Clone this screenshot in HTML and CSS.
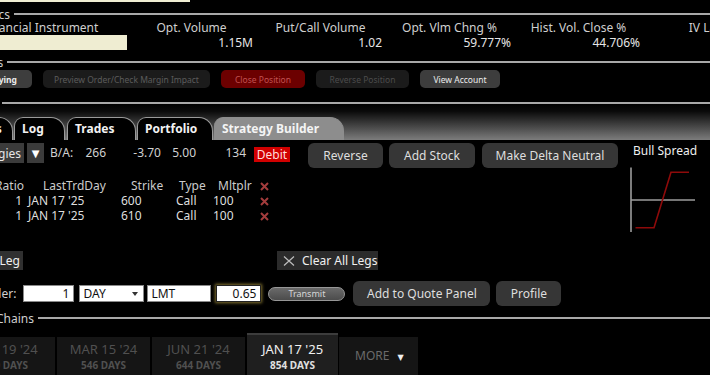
FILE: index.html
```html
<!DOCTYPE html>
<html lang="en">
<head>
  <meta charset="UTF-8" />
  <meta name="viewport" content="width=device-width, initial-scale=1.0"/>
  <title>Option Trader - Strategy Builder</title>
  <link rel="stylesheet" href="styles.css">
</head>
<body>
  <div class="screen">
    <div class="quote-strip"></div>

    <div class="section-head">
      <span class="section-title title-analytics">Analytics</span>
      <span class="rule"></span>
    </div>

    <div class="stats">
      <div class="stat stat-first">
        <div class="stat-label">Financial Instrument</div>
        <div class="stat-input"></div>
      </div>
      <div class="stat">
        <div class="stat-label">Opt. Volume</div>
        <div class="stat-value">1.15M</div>
      </div>
      <div class="stat">
        <div class="stat-label">Put/Call Volume</div>
        <div class="stat-value">1.02</div>
      </div>
      <div class="stat">
        <div class="stat-label">Opt. Vlm Chng %</div>
        <div class="stat-value">59.777%</div>
      </div>
      <div class="stat">
        <div class="stat-label">Hist. Vol. Close %</div>
        <div class="stat-value">44.706%</div>
      </div>
      <div class="stat">
        <div class="stat-label">IV Last</div>
        <div class="stat-value"></div>
      </div>
    </div>

    <div class="section-head section-actions">
      <span class="section-title title-actions">Actions</span>
      <span class="rule"></span>
    </div>

    <div class="action-bar">
      <button class="act act-on act-underlying">Underlying</button>
      <button class="act act-preview">Preview Order/Check Margin Impact</button>
      <button class="act act-close">Close Position</button>
      <button class="act act-reverse">Reverse Position</button>
      <button class="act act-on act-account">View Account</button>
    </div>

    <div class="divider"></div>

    <div class="tabstrip">
      <div class="tab tab-cut">Orders</div>
      <div class="tab tab-log">Log</div>
      <div class="tab tab-trades">Trades</div>
      <div class="tab tab-portfolio">Portfolio</div>
      <div class="tab tab-active">Strategy Builder</div>
    </div>

    <div class="builder">
      <div class="builder-main">
        <div class="strategy-row">
          <button class="dark-btn strat-btn">Strategies</button>
          <button class="dark-btn drop-btn">&#9660;</button>
          <span class="ba-label">B/A:</span>
          <span class="q q-bid">266</span>
          <span class="q q-ask">-3.70</span>
          <span class="q q-mid">5.00</span>
          <span class="q q-size">134</span>
          <span class="debit">Debit</span>
          <button class="grey-btn btn-reverse">Reverse</button>
          <button class="grey-btn btn-stock">Add Stock</button>
          <button class="grey-btn btn-delta">Make Delta Neutral</button>
        </div>

        <div class="legs">
          <div class="legs-head">Ratio</div>
          <div class="legs-head">LastTrdDay</div>
          <div class="legs-head">Strike</div>
          <div class="legs-head">Type</div>
          <div class="legs-head">Mltplr</div>
          <div class="legs-head"><svg class="x-icon" viewBox="0 0 9 9"><path d="M1 1L8 8M8 1L1 8"/></svg></div>

          <div class="leg-cell">1</div>
          <div class="leg-cell">JAN 17 '25</div>
          <div class="leg-cell">600</div>
          <div class="leg-cell">Call</div>
          <div class="leg-cell">100</div>
          <div class="leg-cell"><svg class="x-icon" viewBox="0 0 9 9"><path d="M1 1L8 8M8 1L1 8"/></svg></div>

          <div class="leg-cell">1</div>
          <div class="leg-cell">JAN 17 '25</div>
          <div class="leg-cell">610</div>
          <div class="leg-cell">Call</div>
          <div class="leg-cell">100</div>
          <div class="leg-cell"><svg class="x-icon" viewBox="0 0 9 9"><path d="M1 1L8 8M8 1L1 8"/></svg></div>
        </div>

        <div class="leg-actions">
          <button class="flat-btn add-leg">Add Leg</button>
          <button class="flat-btn clear-legs">
            <svg class="clear-icon" viewBox="0 0 12 10"><path d="M1 0.5L11 9.5M11 0.5L1 9.5"/></svg>
            Clear All Legs
          </button>
        </div>

        <div class="order-row">
          <span class="order-label">Order:</span>
          <div class="field field-qty">1</div>
          <div class="field field-tif">DAY <svg class="caret" viewBox="0 0 6 4"><path d="M0 0H6L3 4Z"/></svg></div>
          <div class="field field-type">LMT</div>
          <div class="field field-price">0.65</div>
          <button class="transmit">Transmit</button>
          <button class="grey-btn btn-quote">Add to Quote Panel</button>
          <button class="grey-btn btn-profile">Profile</button>
        </div>
      </div>

      <div class="builder-side">
        <div class="side-title">Bull Spread</div>
        <svg class="payoff" viewBox="0 0 70 70" width="70" height="70">
          <path class="axis" d="M3 2.5V67M3 35H67"/>
          <path class="pnl" d="M7.5 62.7H26L43 7.3H61"/>
        </svg>
      </div>
    </div>

    <div class="section-head section-chains">
      <span class="section-title title-chains">Option Chains</span>
      <span class="rule"></span>
    </div>

    <div class="expiries">
      <div class="expiry expiry-cut">
        <div class="exp-date">DEC 19 '24</div>
        <div class="exp-days">490 DAYS</div>
      </div>
      <div class="expiry">
        <div class="exp-date">MAR 15 '24</div>
        <div class="exp-days">546 DAYS</div>
      </div>
      <div class="expiry">
        <div class="exp-date">JUN 21 '24</div>
        <div class="exp-days">644 DAYS</div>
      </div>
      <div class="expiry expiry-active">
        <div class="exp-date">JAN 17 '25</div>
        <div class="exp-days">854 DAYS</div>
      </div>
      <div class="expiry expiry-more">MORE <span class="more-caret">&#9660;</span></div>
    </div>
  </div>
</body>
</html>
```

FILE: styles.css
```css
* {
  box-sizing: border-box;
}

body {
  margin: 0;
  background-color: #000;
  font-family: "Noto Sans", "DejaVu Sans", sans-serif;
  color: #d4d4d4;
}

button {
  font-family: inherit;
  border: none;
  padding: 0;
  cursor: pointer;
}

.screen {
  width: 710px;
  height: 375px;
  overflow: hidden;
}

.quote-strip {
  width: 190px;
  height: 2px;
  background-color: #efedd2;
}

/* section headers with a rule */
.section-head {
  display: flex;
  align-items: center;
  height: 14px;
  margin-top: 5px;
}

.section-title {
  font-size: 12px;
  color: #cfcfcf;
  white-space: nowrap;
  padding-right: 4px;
}

.title-analytics {
  margin-left: -40px;
}

.title-actions {
  margin-left: -38px;
}

.title-chains {
  margin-left: -46px;
}

.rule {
  flex: 1;
  height: 2px;
  background-color: #a8a8a8;
}

/* analytics stats */
.stats {
  display: grid;
  grid-template-columns: 127px repeat(5, 129px);
}

.stat-label {
  font-size: 12px;
  line-height: 14px;
  height: 14px;
  text-align: center;
  white-space: nowrap;
  color: #cfcfcf;
}

.stat-first .stat-label {
  text-align: left;
  text-indent: -18px;
}

.stat-value {
  font-size: 12px;
  line-height: 15px;
  height: 15px;
  text-align: right;
  padding-right: 3px;
  color: #e6e6e6;
}

.stat-input {
  height: 15px;
  background-color: #efedd2;
}

/* action buttons */
.action-bar {
  display: flex;
  gap: 11px;
  margin-top: 1px;
}

.act {
  height: 18px;
  border-radius: 5px;
  font-size: 8.5px;
  background-color: #1b1b1b;
  color: #5c5c5c;
  flex-shrink: 0;
}

.act-on {
  background-color: #3d3d3d;
  color: #ececec;
}

.act-underlying {
  width: 76px;
  margin-left: -44px;
  text-align: right;
  padding-right: 15px;
  font-weight: bold;
}

.act-preview {
  width: 167px;
}

.act-close {
  width: 84px;
  background-color: #6c0000;
  color: #c25252;
}

.act-reverse {
  width: 93px;
  color: #4c4c4c;
}

.act-account {
  width: 80px;
}

.divider {
  height: 2px;
  margin: 14px 0 0 2px;
  background-color: #a8a8a8;
}

/* tabs */
.tabstrip {
  display: flex;
  align-items: flex-end;
  gap: 1px;
  height: 36px;
  background: linear-gradient(#000 0%, #0a0a0a 20%, #7c7c7c 100%);
}

.tab {
  height: 23px;
  padding: 2px 0 0 7px;
  font-size: 12px;
  font-weight: bold;
  line-height: 18px;
  color: #f2f2f2;
  background-color: #000;
  border: 1px solid #9a9a9a;
  border-bottom: none;
  border-radius: 9px 14px 0 0;
  white-space: nowrap;
  flex-shrink: 0;
}

.tab-cut {
  width: 60px;
  margin-left: -47px;
}

.tab-log {
  width: 51px;
}

.tab-trades {
  width: 69px;
  margin-left: 1px;
}

.tab-portfolio {
  width: 76px;
}

.tab-active {
  width: 130px;
  background-color: #8d8d8d;
  border-color: #8d8d8d;
  color: #f4f4f4;
}

/* strategy builder */
.builder {
  display: flex;
  margin-top: 3px;
}

.builder-main {
  width: 626px;
  flex-shrink: 0;
}

.builder-side {
  flex: 1;
  padding-left: 7px;
}

.strategy-row {
  display: flex;
  align-items: flex-start;
  height: 25px;
  font-size: 12px;
}

.dark-btn {
  height: 20px;
  background-color: #3b3b3b;
  color: #e6e6e6;
  font-size: 12px;
  flex-shrink: 0;
}

.strat-btn {
  width: 64px;
  margin-left: -40px;
  text-align: right;
  padding-right: 3px;
}

.drop-btn {
  width: 17px;
  margin-left: 3px;
  font-size: 10px;
  color: #fff;
}

.ba-label {
  width: 27px;
  margin-left: 6px;
  line-height: 20px;
  color: #d0d0d0;
  flex-shrink: 0;
}

.q {
  text-align: right;
  line-height: 20px;
  color: #d0d0d0;
  flex-shrink: 0;
}

.q-bid {
  width: 29px;
}

.q-ask {
  width: 55px;
}

.q-mid {
  width: 35px;
}

.q-size {
  width: 50px;
}

.debit {
  margin: 4px 0 0 8px;
  width: 36px;
  height: 15px;
  line-height: 15px;
  text-align: center;
  background-color: #d10000;
  color: #ffdcdc;
  flex-shrink: 0;
}

.grey-btn {
  height: 25px;
  border-radius: 6px;
  background-color: #363636;
  color: #dedede;
  font-size: 12px;
  flex-shrink: 0;
}

.btn-reverse {
  width: 75px;
  margin-left: 18px;
}

.btn-stock {
  width: 86px;
  margin-left: 6px;
}

.btn-delta {
  width: 136px;
  margin-left: 7px;
}

.legs {
  display: grid;
  grid-template-columns: 24px 93px 55px 37px 46px 20px;
  margin-top: 10px;
  font-size: 12px;
  line-height: 15px;
}

.legs-head {
  color: #cbcbcb;
  white-space: nowrap;
}

.leg-cell {
  color: #dedede;
  white-space: nowrap;
  padding-left: 4px;
}

.legs-head:nth-child(6n+1),
.leg-cell:nth-child(6n+1) {
  display: flex;
  justify-content: flex-end;
  padding: 0;
}

.leg-cell:nth-child(6n+1) {
  padding-right: 2px;
}

.legs-head:nth-child(6n+2) {
  padding-left: 19px;
}

.legs-head:nth-child(6n+3) {
  padding-left: 14px;
}

.legs-head:nth-child(6n+4) {
  padding-left: 7px;
}

.legs-head:nth-child(6n+5) {
  padding-left: 9px;
}

.legs-head:nth-child(6n),
.leg-cell:nth-child(6n) {
  padding-left: 5px;
}

.x-icon {
  width: 9px;
  height: 9px;
  vertical-align: -1px;
}

.x-icon path {
  stroke: #a33c3c;
  stroke-width: 2;
  fill: none;
}

.leg-actions {
  display: flex;
  margin-top: 28px;
}

.flat-btn {
  height: 19px;
  background-color: #303030;
  color: #f0f0f0;
  font-size: 12px;
  white-space: nowrap;
  flex-shrink: 0;
}

.add-leg {
  width: 52px;
  margin-left: -29px;
  text-align: right;
  padding-right: 3px;
}

.clear-legs {
  display: flex;
  align-items: center;
  gap: 7px;
  width: 101px;
  margin-left: 254px;
  padding-left: 6px;
  background-color: #2b2b2b;
}

.clear-icon {
  width: 12px;
  height: 10px;
}

.clear-icon path {
  stroke: #bdbdbd;
  stroke-width: 1.2;
  fill: none;
}

.order-row {
  display: flex;
  align-items: center;
  height: 25px;
  margin-top: 11px;
  font-size: 12px;
}

.order-label {
  margin-left: -20px;
  color: #d0d0d0;
}

.field {
  height: 17px;
  line-height: 15px;
  background-color: #fff;
  border: 1px solid #8a8a8a;
  color: #111;
  padding: 0 3px;
  flex-shrink: 0;
}

.field-qty {
  width: 51px;
  margin-left: 7px;
  text-align: right;
  padding-right: 4px;
}

.field-tif {
  display: flex;
  align-items: center;
  justify-content: space-between;
  width: 65px;
  margin-left: 5px;
  padding-right: 5px;
}

.caret {
  width: 6px;
  height: 4px;
  fill: #333;
}

.field-type {
  width: 64px;
  margin-left: 3px;
}

.field-price {
  width: 45px;
  margin-left: 5px;
  text-align: right;
  padding-right: 4px;
  border-color: #222;
  box-shadow: 0 0 3px 1px rgba(190, 165, 70, 0.7);
}

.transmit {
  width: 77px;
  height: 14px;
  margin-left: 7px;
  border: 1px solid #979797;
  border-radius: 8px;
  background: linear-gradient(#6a6a6a, #4c4c4c);
  color: #d6d6d6;
  font-size: 9px;
  line-height: 12px;
}

.btn-quote {
  width: 137px;
  margin-left: 8px;
}

.btn-profile {
  width: 65px;
  margin-left: 6px;
}

.side-title {
  font-size: 12px;
  line-height: 15px;
  color: #efefef;
  white-space: nowrap;
}

.payoff {
  display: block;
  margin: 7px 0 0 -5px;
}

.payoff .axis {
  stroke: #9c9c9c;
  stroke-width: 1.6;
  fill: none;
}

.payoff .pnl {
  stroke: #8e0a0a;
  stroke-width: 1.6;
  fill: none;
}

.section-chains {
  margin-top: 5px;
}

.section-chains .rule {
  height: 1.5px;
}

/* expiry selector */
.expiries {
  display: flex;
  align-items: flex-end;
  gap: 2px;
  height: 42px;
  margin-top: 8px;
}

.expiry {
  height: 38px;
  width: 93px;
  flex-shrink: 0;
  background-color: #151515;
  text-align: center;
  color: #505050;
  padding-top: 5px;
}

.expiry-cut {
  margin-left: -38px;
  padding-right: 6px;
}

.exp-date {
  font-size: 13px;
  line-height: 15px;
  white-space: nowrap;
}

.exp-days {
  font-size: 10px;
  font-weight: bold;
  line-height: 12px;
  margin-top: 2px;
  white-space: nowrap;
}

.expiry-active {
  height: 42px;
  width: 91px;
  background-color: #1f1f1f;
  border-top: 2px solid #3c3c3c;
  padding-top: 7px;
  color: #f0f0f0;
}

.expiry-active .exp-days {
  color: #e0e0e0;
}

.expiry-more {
  width: 79px;
  margin-left: -1px;
  font-size: 12px;
  line-height: 28px;
  color: #6a6a6a;
  text-align: left;
  padding: 5px 0 0 16px;
}

.more-caret {
  font-size: 8px;
  color: #f0f0f0;
  margin-left: 5px;
}
```
